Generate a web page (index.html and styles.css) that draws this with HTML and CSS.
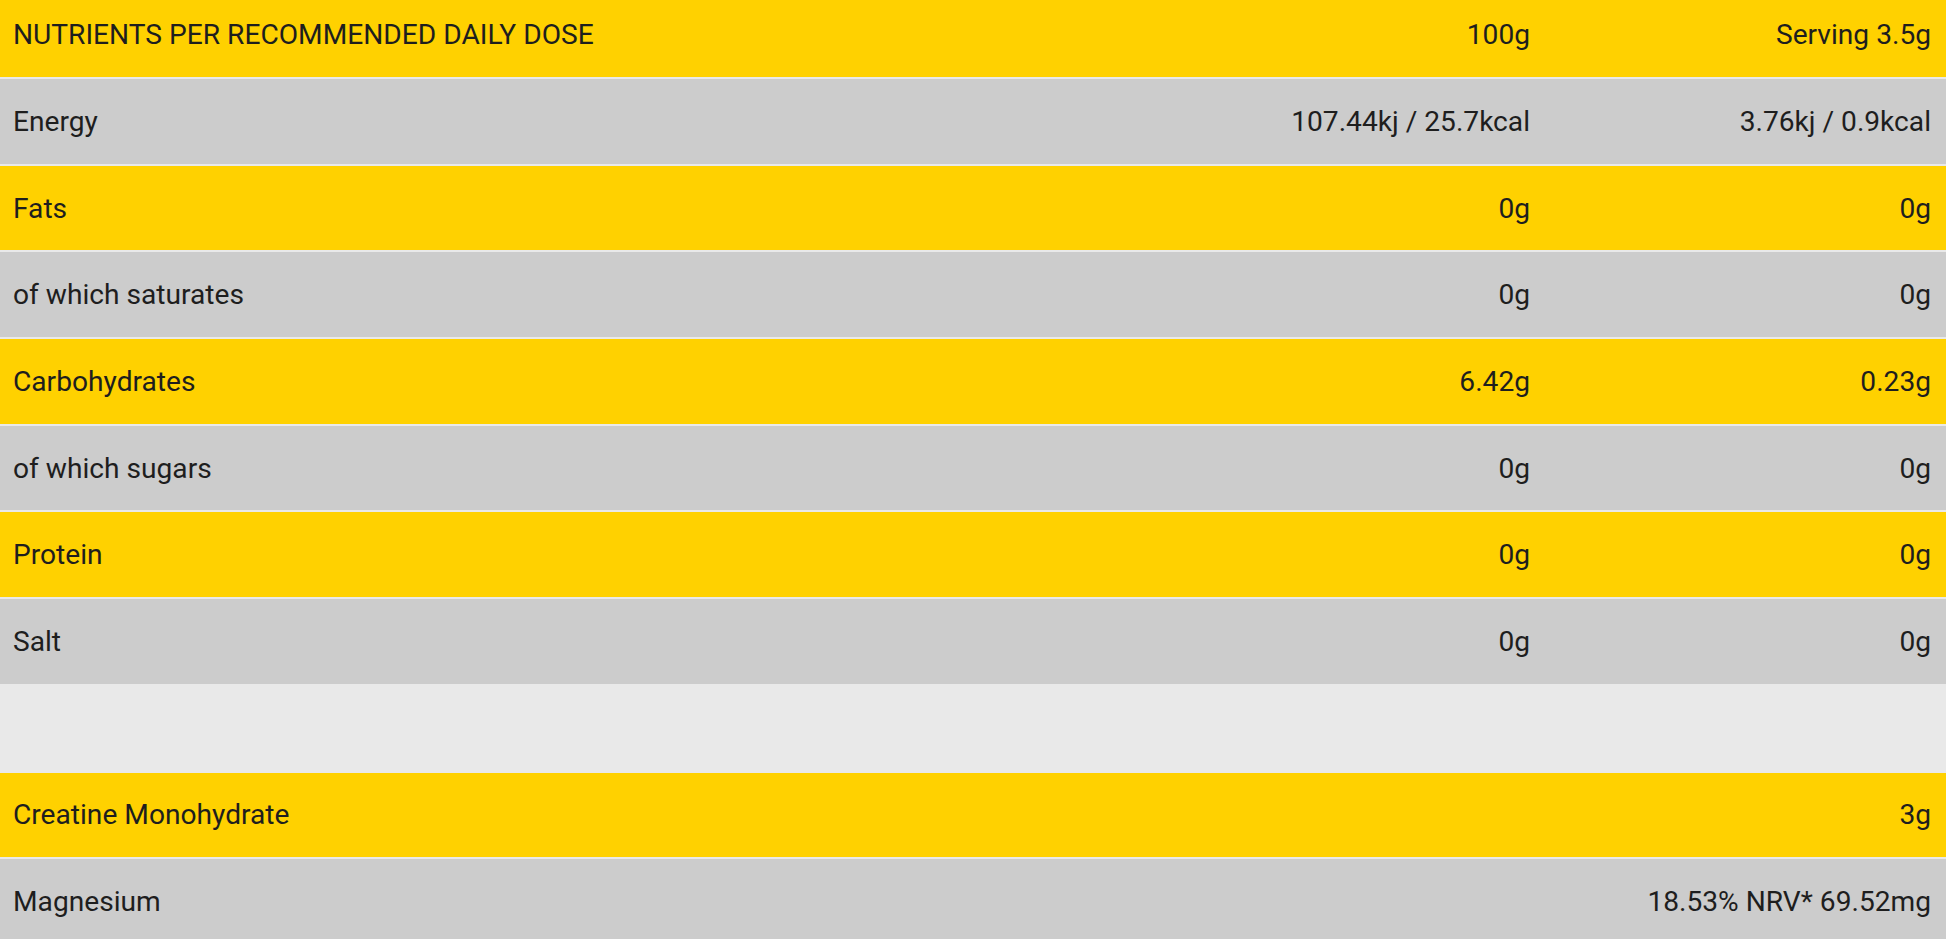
FILE: index.html
```html
<!DOCTYPE html>
<html lang="en">
<head>
<meta charset="utf-8">
<title>Nutrition facts</title>
<link rel="stylesheet" href="styles.css">
</head>
<body>
<div class="table">
  <div class="row head yellow"><div class="c1">NUTRIENTS PER RECOMMENDED DAILY DOSE</div><div class="c2">100g</div><div class="c3">Serving 3.5g</div></div>
  <div class="row grey"><div class="c1">Energy</div><div class="c2">107.44kj / 25.7kcal</div><div class="c3">3.76kj / 0.9kcal</div></div>
  <div class="row yellow"><div class="c1">Fats</div><div class="c2">0g</div><div class="c3">0g</div></div>
  <div class="row grey"><div class="c1">of which saturates</div><div class="c2">0g</div><div class="c3">0g</div></div>
  <div class="row yellow"><div class="c1">Carbohydrates</div><div class="c2">6.42g</div><div class="c3">0.23g</div></div>
  <div class="row grey"><div class="c1">of which sugars</div><div class="c2">0g</div><div class="c3">0g</div></div>
  <div class="row yellow"><div class="c1">Protein</div><div class="c2">0g</div><div class="c3">0g</div></div>
  <div class="row grey"><div class="c1">Salt</div><div class="c2">0g</div><div class="c3">0g</div></div>
  <div class="row blank"><div class="c1"></div><div class="c2"></div><div class="c3"></div></div>
  <div class="row yellow"><div class="c1">Creatine Monohydrate</div><div class="c2"></div><div class="c3">3g</div></div>
  <div class="row grey"><div class="c1">Magnesium</div><div class="c2"></div><div class="c3">18.53% NRV* 69.52mg</div></div>
</div>
</body>
</html>
```
FILE: styles.css
```css
html, body {
  margin: 0;
  padding: 0;
  background: #e9e9e9;
  overflow: hidden;
}
body {
  font-family: Roboto, "Liberation Sans", sans-serif;
  font-size: 28.15px;
  color: #1e1e1e;
}
.table {
  display: flex;
  flex-direction: column;
  gap: 2px;
}
.row {
  display: grid;
  grid-template-columns: 1fr 400px 401px;
  align-items: center;
  height: 84.7px;
}
.row.head {
  height: 77px;
  padding-bottom: 8px;
  box-sizing: border-box;
}
.yellow { background: #ffd100; }
.grey { background: #cccccc; }
.blank { background: #e9e9e9; }
.c1 {
  padding-left: 13px;
  white-space: nowrap;
}
.c2, .c3 {
  text-align: right;
  padding-right: 15px;
  white-space: nowrap;
}
```
